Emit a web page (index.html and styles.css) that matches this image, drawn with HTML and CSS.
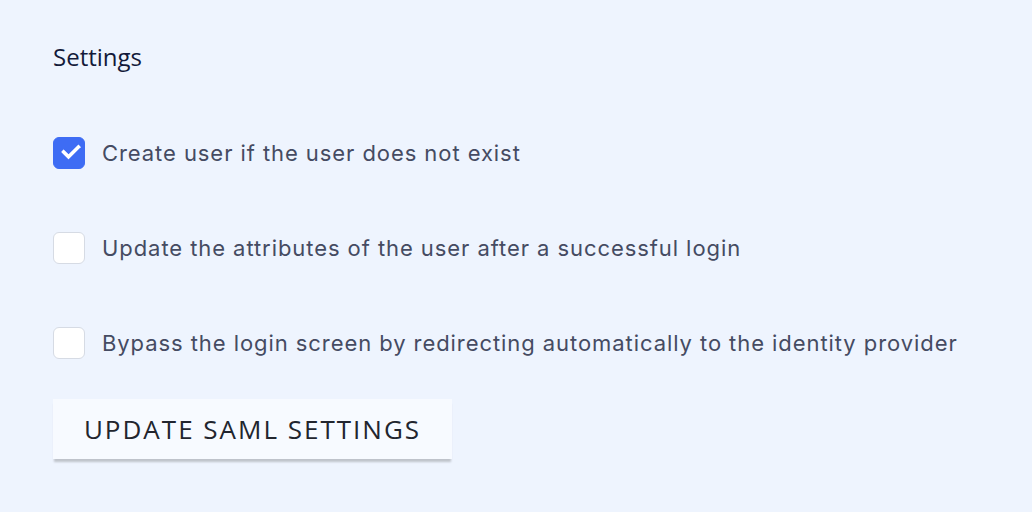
FILE: index.html
```html
<!DOCTYPE html>
<html lang="en">
<head>
  <meta charset="UTF-8">
  <title>SAML Settings</title>
  <link rel="stylesheet" href="styles.css">
</head>
<body>
  <section class="ajustes">
    <h2>Settings</h2>

    <label class="opcion">
      <input type="checkbox" checked>
      <span class="caja"></span>
      <span class="texto">Create user if the user does not exist</span>
    </label>
    <label class="opcion">
      <input type="checkbox">
      <span class="caja"></span>
      <span class="texto">Update the attributes of the user after a successful login</span>
    </label>
    <label class="opcion">
      <input type="checkbox">
      <span class="caja"></span>
      <span class="texto">Bypass the login screen by redirecting automatically to the identity provider</span>
    </label>

    <button class="btn-actualizar">Update SAML settings</button>
  </section>
</body>
</html>
```

FILE: styles.css
```css
body {
  margin: 0;
  background-color: #eef4fe;
  font-family: Inter, "Noto Sans", sans-serif;
}
.ajustes {
  padding: 40px 53px;
  display: flex;
  flex-direction: column;
  align-items: flex-start;
}
.ajustes h2 {
  margin: 0 0 64px;
  font-family: "Open Sans", sans-serif;
  font-weight: 400;
  font-size: 24px;
  color: #131a3a;
}
.opcion {
  display: flex;
  align-items: center;
  gap: 17px;
  margin-bottom: 63px;
  cursor: pointer;
}
.opcion input {
  display: none;
}
.caja {
  width: 30px;
  height: 30px;
  border: 1px solid #d6dbe4;
  border-radius: 6px;
  background-color: white;
  position: relative;
}
.opcion input:checked + .caja {
  background-color: #3e6cf4;
  border-color: #3e6cf4;
}
.opcion input:checked + .caja::after {
  content: "";
  position: absolute;
  left: 8px;
  top: 6px;
  width: 14px;
  height: 7px;
  border-left: 4px solid white;
  border-bottom: 4px solid white;
  transform: rotate(-45deg);
  border-radius: 1px;
}
.texto {
  font-size: 22px;
  letter-spacing: 0.93px;
  color: #454b62;
}
.btn-actualizar {
  margin-top: -23px;
  width: 399px;
  height: 60px;
  border: none;
  background-color: #f7faff;
  box-shadow: 0 4px 2px -1px #bfc3cb;
  font-family: "Open Sans", sans-serif;
  font-size: 26px;
  text-transform: uppercase;
  letter-spacing: 2px;
  color: #22252e;
  cursor: pointer;
}
```
